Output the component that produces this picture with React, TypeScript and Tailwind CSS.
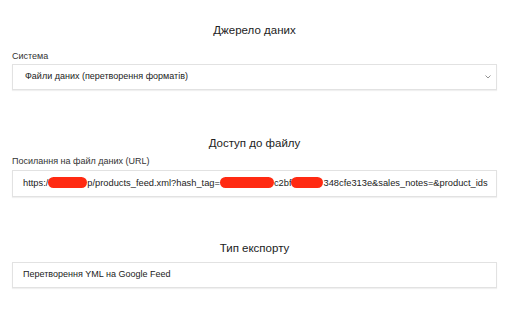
import React from 'react';

const Blob = ({ w }: { w: string }) => (
  <span className={`inline-block ${w} h-[11px] align-[-2px] rounded-full bg-[#ff2a12]`} />
);

export default function App() {
  return (
    <div className="w-[512px] h-[313px] bg-white pl-[12px] pr-[15px] pt-[22px] font-['Liberation_Sans',Arial,sans-serif] text-[#222]">
      <h2 className="text-[11.5px] leading-[16px] text-center text-[#222]">Джерело даних</h2>
      <div className="mt-[12px] text-[9px] leading-[12px] text-[#333]">Система</div>
      <div className="mt-[2px] h-[26px] flex items-center justify-between border border-[#e2e2e2] shadow-[0_1px_1px_rgba(0,0,0,0.06)] pl-[12px] pr-[5px]">
        <span className="text-[9px]">Файли даних (перетворення форматів)</span>
        <svg width="6" height="4" viewBox="0 0 6 4" className="text-[#777]">
          <path d="M0.5 0.5 L3 3 L5.5 0.5" fill="none" stroke="currentColor" strokeWidth="0.8" />
        </svg>
      </div>

      <h2 className="mt-[45px] text-[11.5px] leading-[16px] text-center">Доступ до файлу</h2>
      <div className="mt-[4px] text-[9px] leading-[12px] text-[#333]">Посилання на файл даних (URL)</div>
      <div className="mt-[3px] h-[27px] flex items-center border border-[#e2e2e2] shadow-[0_1px_1px_rgba(0,0,0,0.06)] pl-[10px] pr-[8px] overflow-hidden">
        <div className="text-[9.3px] whitespace-nowrap overflow-hidden">
          https:/
          <Blob w="w-[39px]" />
          p/products_feed.xml?hash_tag=
          <Blob w="w-[54px]" />
          c2bf
          <Blob w="w-[32px]" />
          348cfe313e&amp;sales_notes=&amp;product_ids
        </div>
      </div>

      <h2 className="mt-[43px] text-[11.5px] leading-[16px] text-center">Тип експорту</h2>
      <div className="mt-[6px] h-[26px] flex items-center border border-[#e2e2e2] shadow-[0_1px_1px_rgba(0,0,0,0.06)] pl-[10px]">
        <span className="text-[9px]">Перетворення YML на Google Feed</span>
      </div>
    </div>
  );
}
